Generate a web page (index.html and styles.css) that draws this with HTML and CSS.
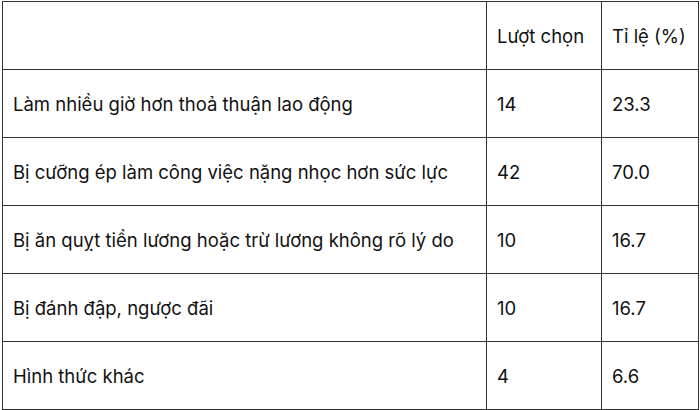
FILE: index.html
```html
<!DOCTYPE html>
<html lang="vi">
<head>
<meta charset="utf-8">
<link rel="stylesheet" href="styles.css">
</head>
<body>
<table class="data">
  <colgroup>
    <col class="c1"><col class="c2"><col class="c3">
  </colgroup>
  <tr><td></td><td>Lượt chọn</td><td>Tỉ lệ (%)</td></tr>
  <tr><td>Làm nhiều giờ hơn thoả thuận lao động</td><td>14</td><td>23.3</td></tr>
  <tr><td>Bị cưỡng ép làm công việc nặng nhọc hơn sức lực</td><td>42</td><td>70.0</td></tr>
  <tr><td>Bị ăn quỵt tiền lương hoặc trừ lương không rõ lý do</td><td>10</td><td>16.7</td></tr>
  <tr><td>Bị đánh đập, ngược đãi</td><td>10</td><td>16.7</td></tr>
  <tr><td>Hình thức khác</td><td>4</td><td>6.6</td></tr>
</table>
</body>
</html>
```
FILE: styles.css
```css
html, body { margin: 0; padding: 0; background: #fff; }
body { padding: 1px 0 0 2px; }
.data {
  border-collapse: collapse;
  table-layout: fixed;
  width: 696px;
  font-family: Inter, "Noto Sans", sans-serif;
  font-size: 18.5px;
  color: #111;
}
.c1 { width: 484px; }
.c2 { width: 115px; }
.c3 { width: 97px; }
.data tr { height: 68px; }
.data td {
  border: 1px solid #333;
  padding: 0 10px;
  vertical-align: middle;
  white-space: nowrap;
}
```
